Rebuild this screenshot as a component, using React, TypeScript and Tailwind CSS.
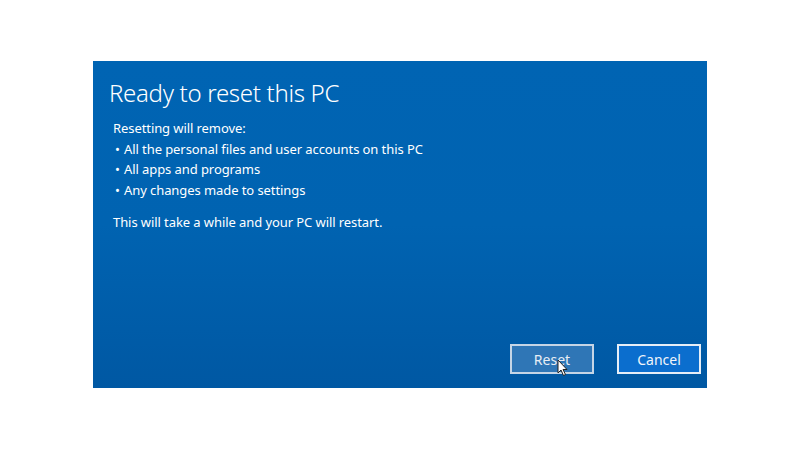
import React from "react";

function Bullet({ children }: { children: React.ReactNode }) {
  return (
    <p className="flex pl-[2px]">
      <span className="w-[9px]">•</span>
      <span>{children}</span>
    </p>
  );
}

export default function App() {
  return (
    <div className="w-[800px] h-[450px] bg-white relative" style={{ fontFamily: '"Noto Sans", "Open Sans", sans-serif' }}>
      <div className="absolute left-[93px] top-[61px] w-[614px] h-[327px] bg-gradient-to-b from-[#0064b3] via-[#0063b1] to-[#0058a3] flex flex-col text-white">
        <div className="pl-[16px] pt-[16px]">
          <h1 className="text-[24px] leading-[32px] font-light tracking-[-0.3px]">Ready to reset this PC</h1>
        </div>
        <div className="pl-[20px] pt-[9px] text-[13px] leading-[20.7px] tracking-[-0.08px]">
          <p>Resetting will remove:</p>
          <Bullet>All the personal files and user accounts on this PC</Bullet>
          <Bullet>All apps and programs</Bullet>
          <Bullet>Any changes made to settings</Bullet>
          <p className="mt-[11px]">This will take a while and your PC will restart.</p>
        </div>
        <div className="flex-1" />
        <div className="flex justify-end gap-[23px] pr-[6px] pb-[14px]">
          <button className="relative w-[84px] h-[30px] border-2 border-[#c5d5e6] bg-[#2f76b6] text-[14px] text-[#e8eef5]">
            Reset
            <svg className="absolute left-[45px] top-[13px]" width="12" height="18" viewBox="0 0 12 18">
              <path d="M1 1 L1 14 L4 11 L6.5 16.5 L8.5 15.5 L6 10.5 L10 10.5 Z" fill="#ffffff" stroke="#222" strokeWidth="1" />
            </svg>
          </button>
          <button className="w-[84px] h-[30px] border-2 border-[#e6eef7] bg-[#0b6ece] text-[14px] text-[#f0f5fa]">
            Cancel
          </button>
        </div>
      </div>
    </div>
  );
}
